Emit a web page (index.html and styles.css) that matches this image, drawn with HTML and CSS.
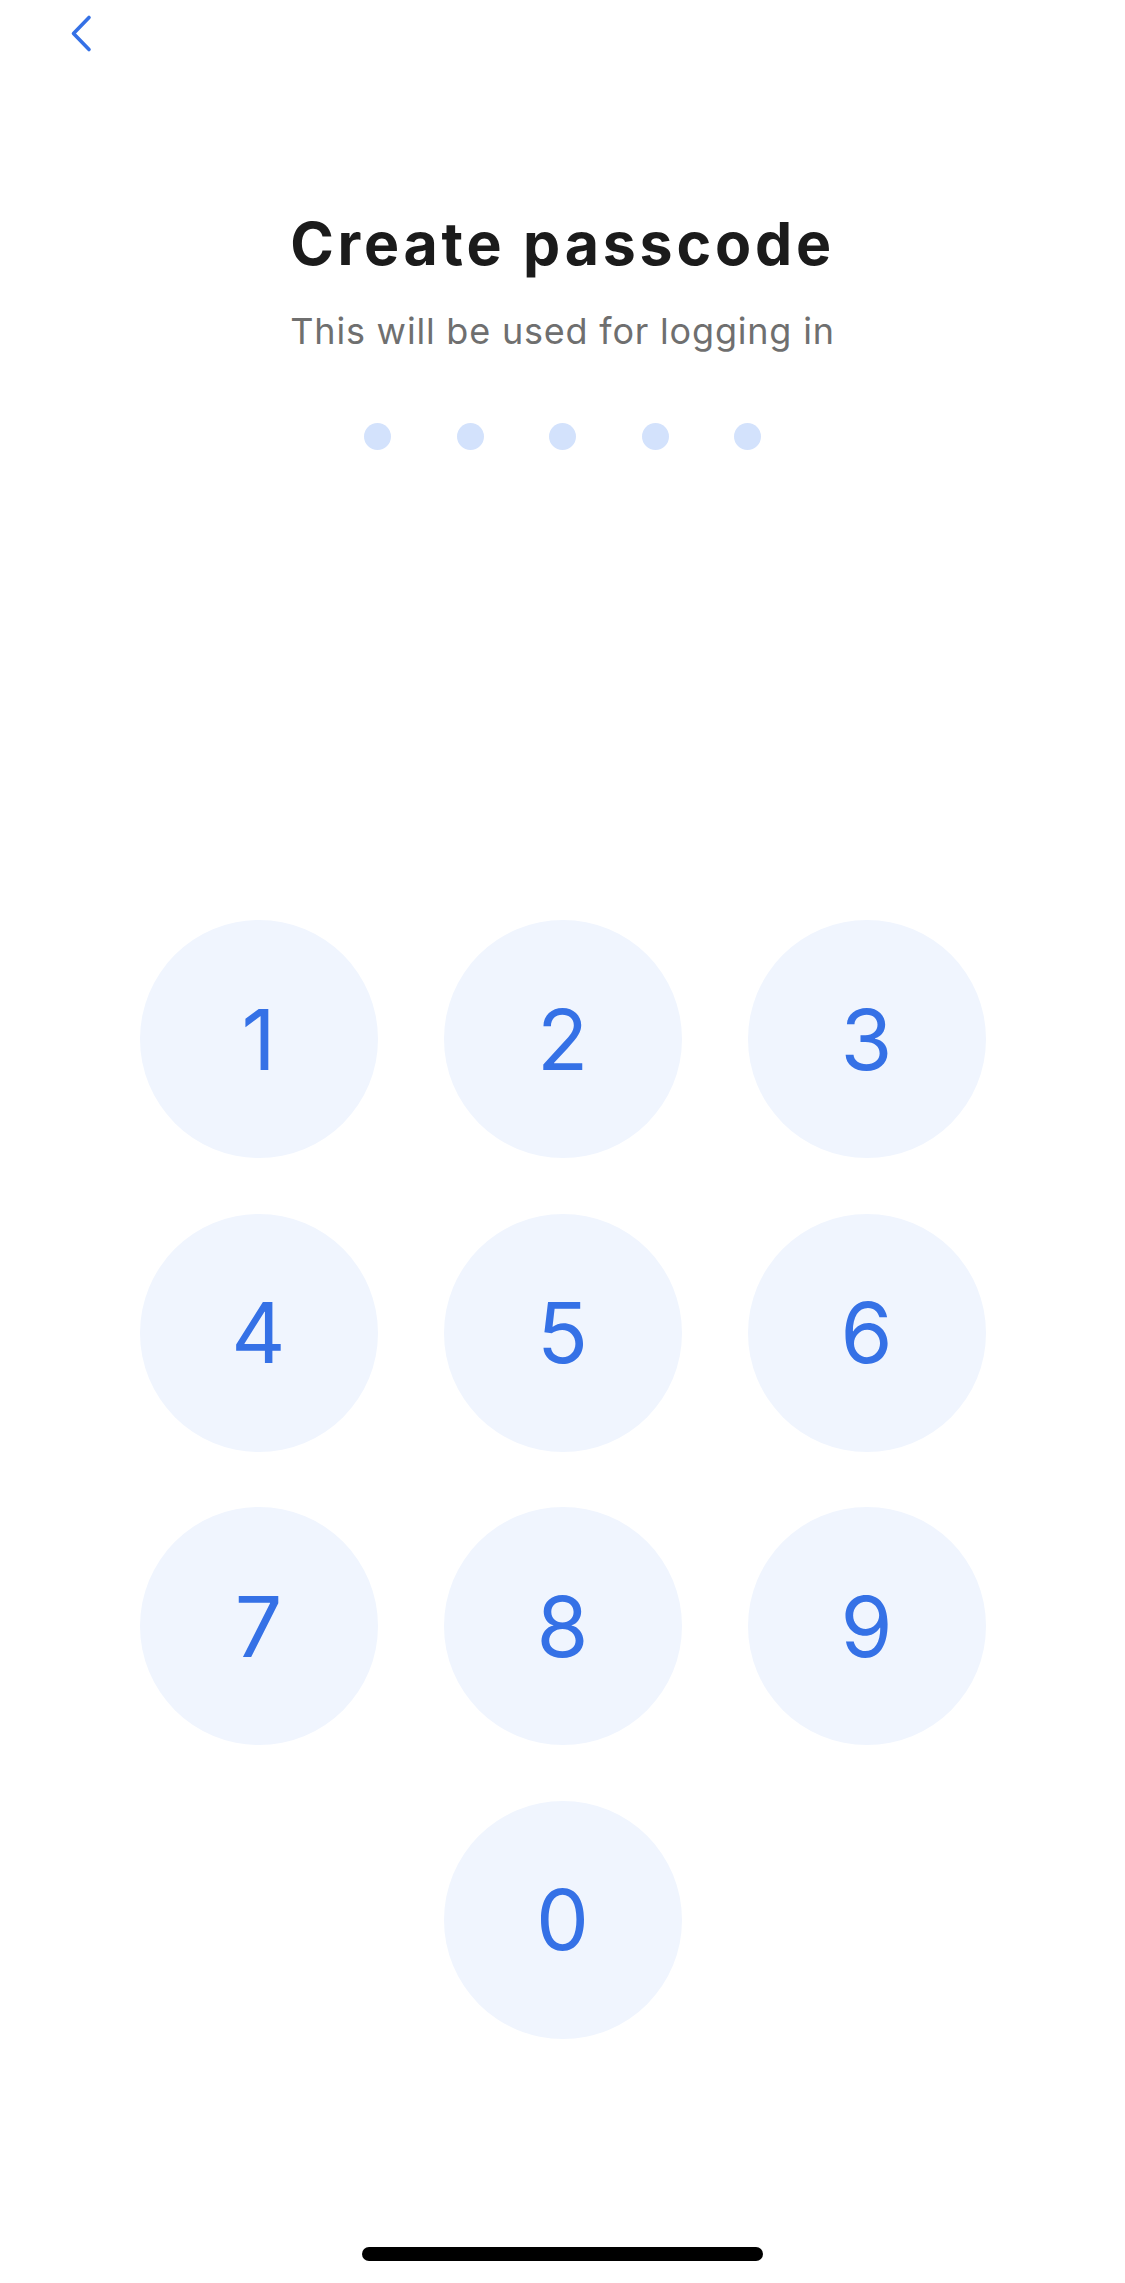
FILE: index.html
```html
<!DOCTYPE html>
<html lang="en">
<head>
<meta charset="utf-8">
<title>Create passcode</title>
<link rel="stylesheet" href="styles.css">
</head>
<body>
<div class="screen">
  <div class="topbar">
    <button class="back" aria-label="Back">
      <svg width="40" height="48" viewBox="0 0 40 48"><path d="M29 7.5 L13.5 23.5 L29 39.5" fill="none" stroke="#3571e6" stroke-width="3.6" stroke-linecap="round" stroke-linejoin="round"/></svg>
    </button>
  </div>
  <h1 class="title">Create passcode</h1>
  <p class="subtitle">This will be used for logging in</p>
  <div class="dots">
    <span class="dot"></span><span class="dot"></span><span class="dot"></span><span class="dot"></span><span class="dot"></span>
  </div>
  <div class="keypad">
    <button class="key">1</button>
    <button class="key">2</button>
    <button class="key">3</button>
    <button class="key">4</button>
    <button class="key">5</button>
    <button class="key">6</button>
    <button class="key">7</button>
    <button class="key">8</button>
    <button class="key">9</button>
    <button class="key key-zero">0</button>
  </div>
  <div class="home-indicator"></div>
</div>
</body>
</html>
```

FILE: styles.css
```css
* { box-sizing: border-box; }
html, body { margin: 0; padding: 0; background: #ffffff; }
body { width: 1125px; height: 2283px; overflow: hidden; font-family: "Inter", "Roboto", sans-serif; }

.screen {
  width: 1125px;
  height: 2283px;
  display: flex;
  flex-direction: column;
  align-items: center;
}

.topbar {
  align-self: stretch;
  height: 58px;
  padding: 10px 0 0 60px;
}
.back {
  display: block;
  width: 40px;
  height: 48px;
  padding: 0;
  border: 0;
  background: none;
}
.back svg { display: block; }

.title {
  margin: 151px 0 0;
  font-size: 59px;
  line-height: 70px;
  font-weight: 700;
  color: #1b1b1b;
  letter-spacing: 3.8px;
}
.subtitle {
  margin: 30px 0 0;
  font-size: 36px;
  line-height: 44px;
  font-weight: 400;
  color: #6f6f6f;
  letter-spacing: 0.8px;
}

.dots {
  margin-top: 70px;
  display: flex;
  gap: 65.5px;
}
.dot {
  width: 27px;
  height: 27px;
  border-radius: 50%;
  background: #d3e2fc;
}

.keypad {
  margin-top: 470px;
  display: grid;
  grid-template-columns: repeat(3, 238px);
  grid-auto-rows: 238px;
  column-gap: 66px;
  row-gap: 55.5px;
}
.key {
  width: 238px;
  height: 238px;
  border: 0;
  border-radius: 50%;
  background: #f0f5fe;
  color: #3571e6;
  font-family: "Inter", "Roboto", sans-serif;
  font-size: 84px;
  font-weight: 400;
  display: flex;
  align-items: center;
  justify-content: center;
  padding: 0;
}
.key-zero { grid-column: 2; }

.home-indicator {
  margin-top: 208px;
  width: 401px;
  height: 14px;
  border-radius: 7px;
  background: #000000;
}
```
